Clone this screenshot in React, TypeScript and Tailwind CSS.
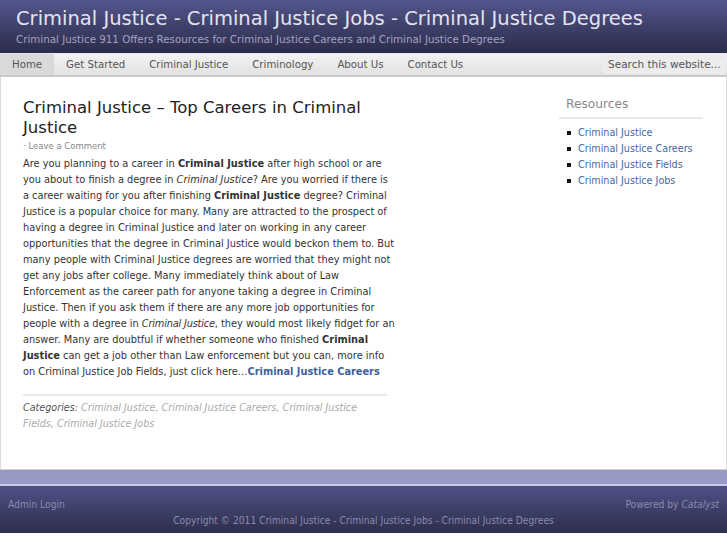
export default function App() {
  const navItems = ["Home", "Get Started", "Criminal Justice", "Criminology", "About Us", "Contact Us"];
  const resources = ["Criminal Justice", "Criminal Justice Careers", "Criminal Justice Fields", "Criminal Justice Jobs"];

  return (
    <div className="w-[727px] h-[545px] bg-white font-['DejaVu_Sans',sans-serif] overflow-hidden">
      {/* Header */}
      <header className="h-[53px] bg-gradient-to-b from-[#53568c] to-[#2c2c4a] pl-4 pt-[5px]">
        <h1 className="text-[19.5px] leading-[28px] text-[#e4e4ee] whitespace-nowrap">
          Criminal Justice - Criminal Justice Jobs - Criminal Justice Degrees
        </h1>
        <p className="text-[10.3px] leading-[12px] text-[#a3a3c4] whitespace-nowrap">
          Criminal Justice 911 Offers Resources for Criminal Justice Careers and Criminal Justice Degrees
        </p>
      </header>

      {/* Navigation */}
      <nav className="h-[24px] flex items-stretch justify-between bg-gradient-to-b from-[#f2f2f2] to-[#e2e2e2] border-t border-[#e8e8e8] border-b-2 border-b-[#c9c9c9]">
        <ul className="flex">
          {navItems.map((item, i) => (
            <li
              key={item}
              className={
                i === 0
                  ? "px-3 flex items-center text-[10.2px] text-[#555] bg-[#d9d9d9] whitespace-nowrap"
                  : "px-3 flex items-center text-[10.2px] text-[#555] whitespace-nowrap"
              }
            >
              {item}
            </li>
          ))}
        </ul>
        <div className="my-[1px] mr-[2px] w-[122px] bg-[#ececec] flex items-center pl-[5px] text-[10.5px] text-[#555] whitespace-nowrap overflow-hidden">
          Search this website...
        </div>
      </nav>

      {/* Content */}
      <div className="h-[393px] flex border-l border-r border-[#dcdcdc] border-b border-b-[#d0d0d0] bg-white">
        <main className="w-[389px] pl-[22px] pt-[21px]">
          <h2 className="text-[16.5px] leading-[20px] text-[#222]">
            Criminal Justice – Top Careers in Criminal Justice
          </h2>
          <div className="text-[8.5px] leading-[12px] text-[#888] mt-[2px]">· Leave a Comment</div>
          {/* line breaks follow the original rendering */}
          <p className="mt-[4px] text-[9.8px] leading-[16px] text-[#333] whitespace-nowrap">
            Are you planning to a career in <b>Criminal Justice</b> after high school or are
            <br />
            you about to finish a degree in <i>Criminal Justice</i>? Are you worried if there is
            <br />
            a career waiting for you after finishing <b>Criminal Justice</b> degree? Criminal
            <br />
            Justice is a popular choice for many. Many are attracted to the prospect of
            <br />
            having a degree in Criminal Justice and later on working in any career
            <br />
            opportunities that the degree in Criminal Justice would beckon them to. But
            <br />
            many people with Criminal Justice degrees are worried that they might not
            <br />
            get any jobs after college. Many immediately think about of Law
            <br />
            Enforcement as the career path for anyone taking a degree in Criminal
            <br />
            Justice. Then if you ask them if there are any more job opportunities for
            <br />
            people with a degree in <i className="tracking-[-0.2px]">Criminal Justice</i>, they would most likely fidget for an
            <br />
            answer. Many are doubtful if whether someone who finished <b>Criminal</b>
            <br />
            <b>Justice</b> can get a job other than Law enforcement but you can, more info
            <br />
            on Criminal Justice Job Fields, just click here…<b className="text-[#3f5f9c]">Criminal Justice Careers</b>
          </p>
          <div className="mt-[14px] w-[364px] border-t-2 border-[#e6e6ee] pt-[4px] text-[9.6px] leading-[16px] italic text-[#aaa]">
            <span className="text-[#555]">Categories:</span> Criminal Justice, Criminal Justice Careers, Criminal
            Justice Fields, Criminal Justice Jobs
          </div>
        </main>
        <aside className="ml-auto mr-[23px] w-[144px] pt-[18px]">
          <h3 className="text-[12.2px] leading-[18px] text-[#888] pl-[7px] pb-[4px] border-b-2 border-[#e8e8e8]">
            Resources
          </h3>
          <ul className="mt-[6px] pl-[8px]">
            {resources.map((r) => (
              <li key={r} className="flex items-center text-[9.6px] leading-[16px] text-[#4a67a3] whitespace-nowrap">
                <span className="w-[4px] h-[4px] bg-[#111] mr-[7px]" />
                {r}
              </li>
            ))}
          </ul>
        </aside>
      </div>

      {/* Lavender band */}
      <div className="h-[16px] bg-[#9999c6] border-b-2 border-[#c8c8e4]" />

      {/* Footer */}
      <footer className="h-[47px] bg-gradient-to-b from-[#4f5186] to-[#2e2e4c] px-2 pt-[11px] font-['DejaVu_Sans_Condensed','DejaVu_Sans',sans-serif] text-[10.2px] leading-[16px] text-[#8a8ab0]">
        <div className="flex justify-between">
          <span>Admin Login</span>
          <span>
            Powered by <i>Catalyst</i>
          </span>
        </div>
        <div className="text-center">
          Copyright © 2011 Criminal Justice - Criminal Justice Jobs - Criminal Justice Degrees
        </div>
      </footer>
    </div>
  );
}
